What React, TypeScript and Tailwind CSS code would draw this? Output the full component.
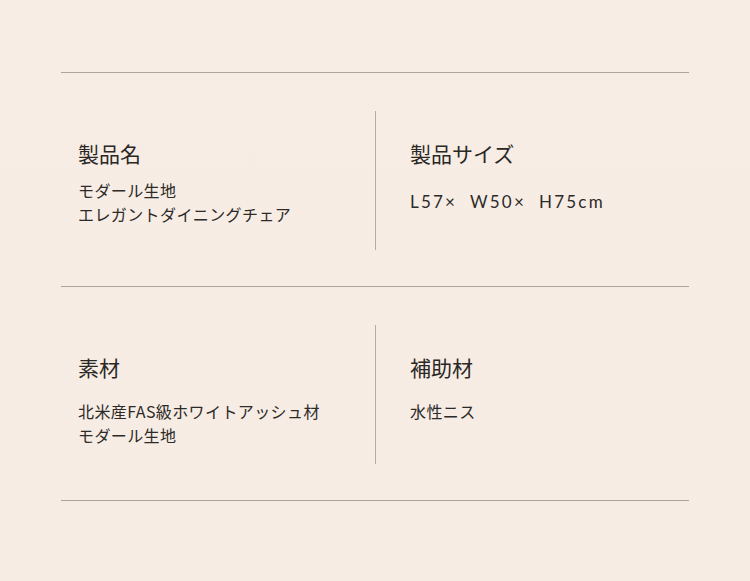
const jp = "font-['Noto_Sans_CJK_JP','Noto_Sans',sans-serif]"

const Cell: React.FC<{
  title: string
  lines: string[]
  gap: string
  right?: boolean
}> = ({ title, lines, gap, right }) => (
  <div className={right ? "pl-[34px] pt-[28px]" : "pl-[17px] pt-[28px]"}>
    <div className="text-[21px] leading-[28px] text-[#2a2725]">{title}</div>
    <div
      className={`${gap} text-[16px] leading-[24px] tracking-[0.4px] text-[#2d2a28] whitespace-pre`}
    >
      {lines.map((l) => (
        <div key={l}>{l}</div>
      ))}
    </div>
  </div>
)

export default function App() {
  return (
    <div
      className={`w-[750px] h-[581px] bg-gradient-to-b from-[#f7ede4] to-[#f6ece4] pt-[72px] px-[61px] ${jp}`}
    >
      <div className="border-t border-[#afa298]" />
      <div className="grid grid-cols-[315px_1fr] h-[214px] pt-[38px] pb-[36px] border-b border-[#afa298]">
        <div className="border-r border-[#c2a994]">
          <Cell
            title="製品名"
            lines={["モダール生地", "エレガントダイニングチェア"]}
            gap="mt-[11px]"
          />
        </div>
        <Cell
          right
          title="製品サイズ"
          lines={["L57×  W50×  H75cm"]}
          gap="mt-[23px] font-['Lato','Noto_Sans_CJK_JP',sans-serif] !text-[17px] !tracking-[2.2px]"
        />
      </div>
      <div className="grid grid-cols-[315px_1fr] h-[214px] pt-[38px] pb-[36px] border-b border-[#afa298]">
        <div className="border-r border-[#c2a994]">
          <Cell
            title="素材"
            lines={["北米産FAS級ホワイトアッシュ材", "モダール生地"]}
            gap="mt-[18px]"
          />
        </div>
        <Cell right title="補助材" lines={["水性ニス"]} gap="mt-[18px]" />
      </div>
    </div>
  )
}
